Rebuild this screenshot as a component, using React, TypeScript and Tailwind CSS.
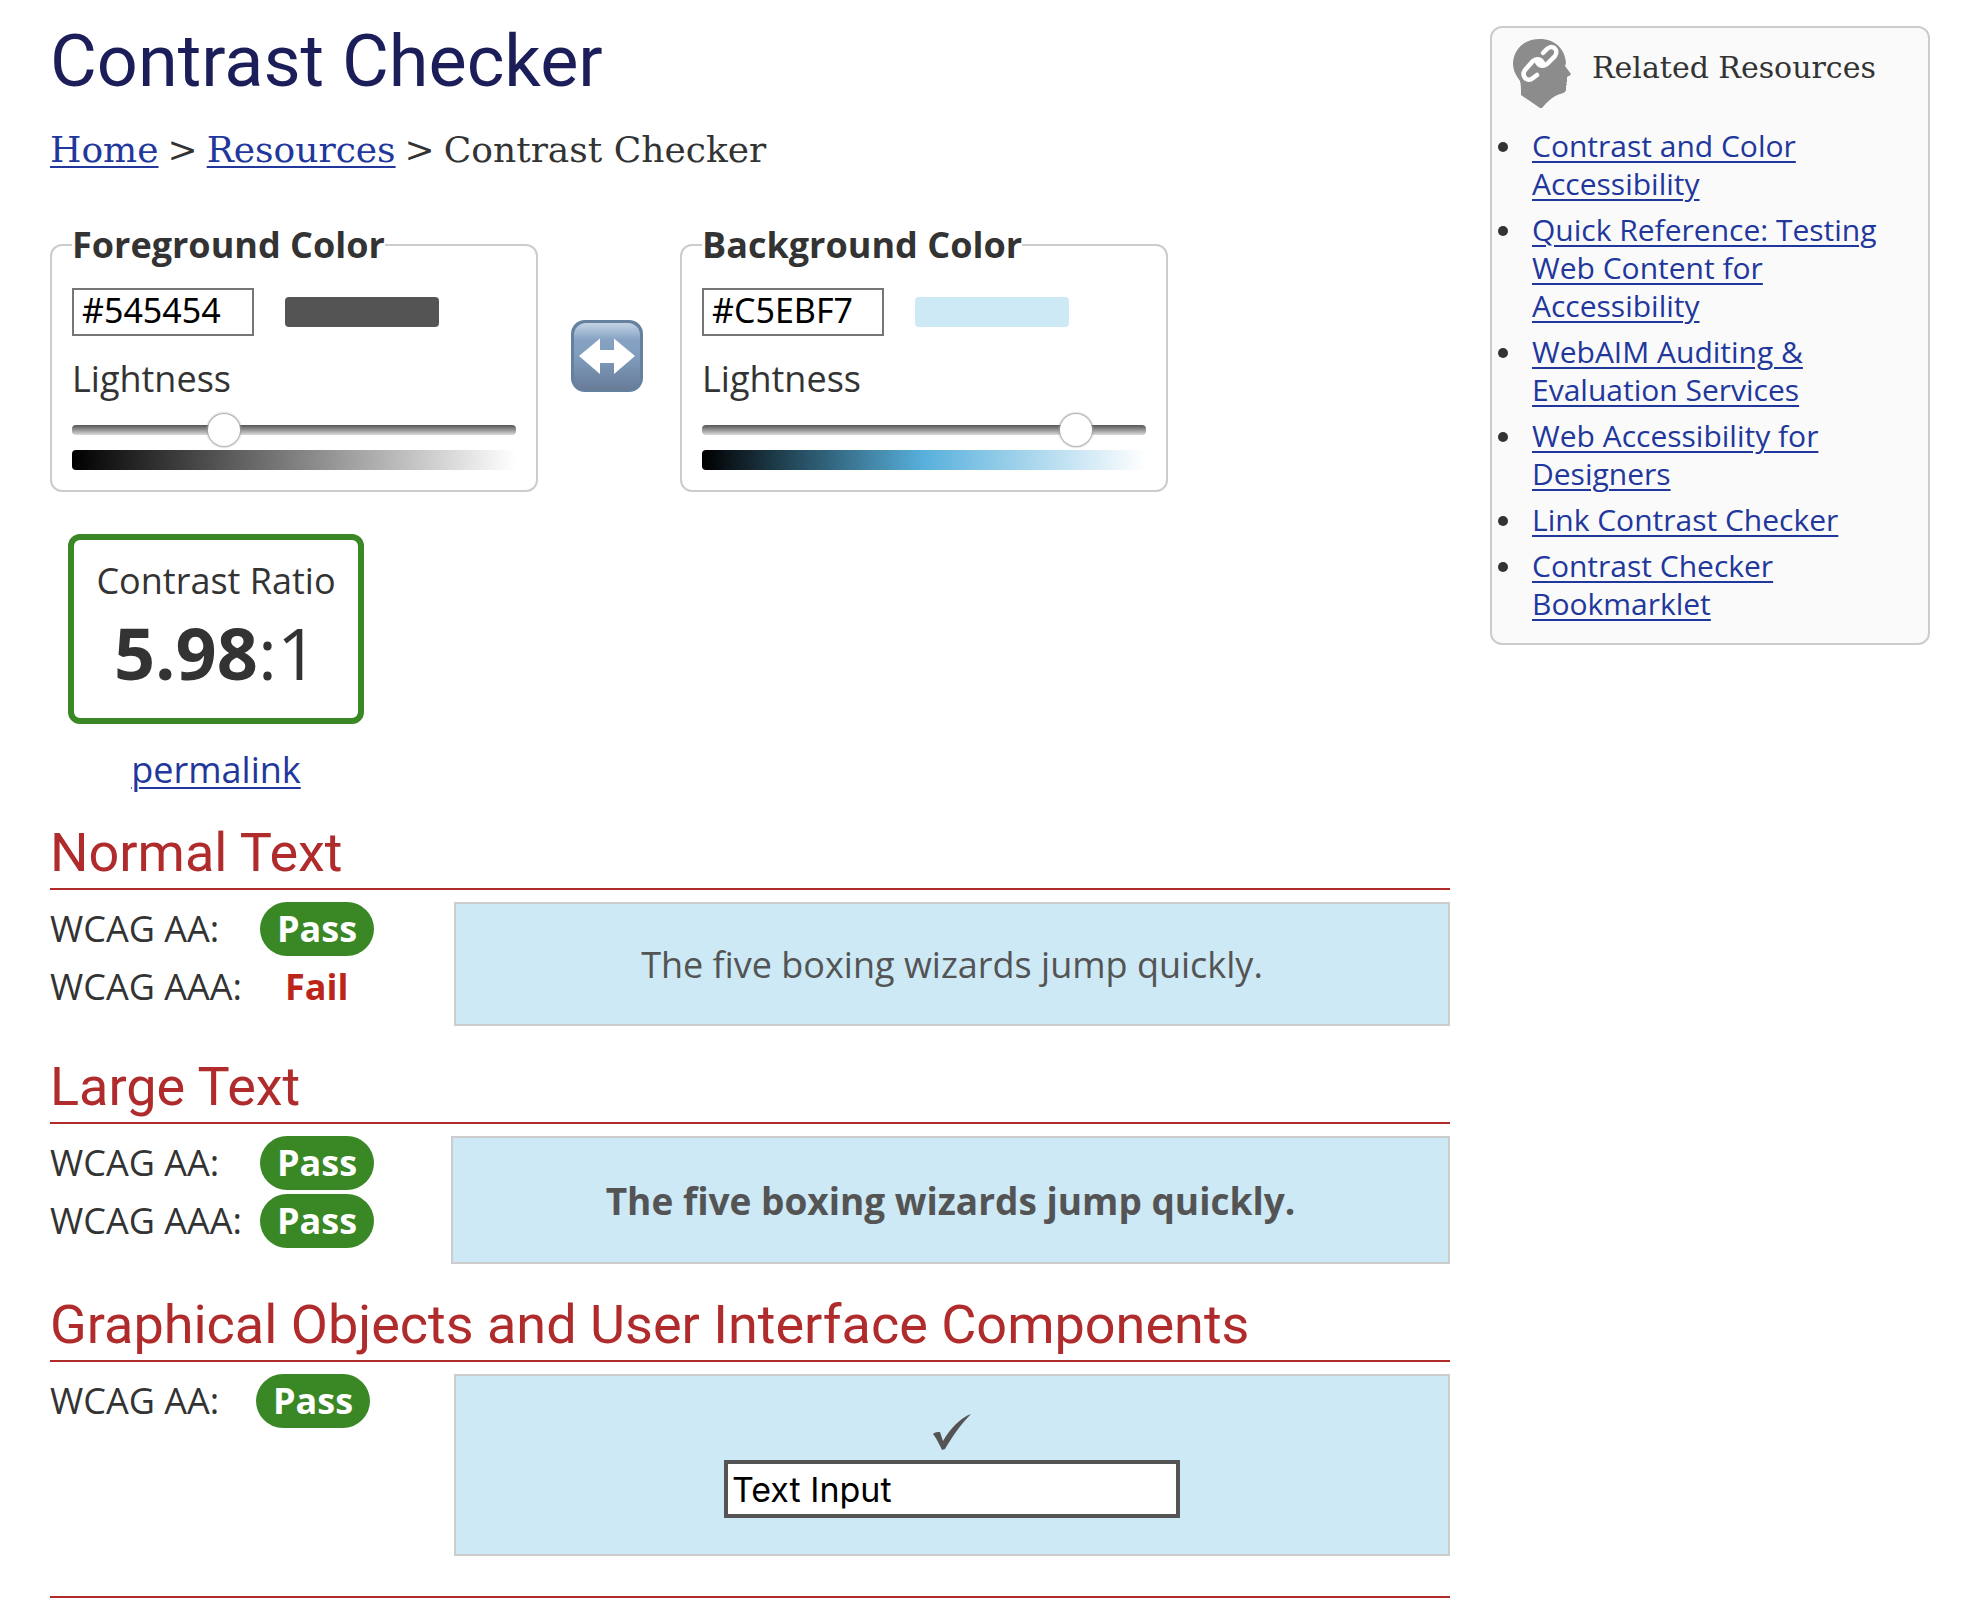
import { useState, type ReactNode } from "react";

const SANS = "font-['Open_Sans',sans-serif]";
const linkClass = "text-[#22379c] underline decoration-2 underline-offset-4";

const related = [
  "Contrast and Color Accessibility",
  "Quick Reference: Testing Web Content for Accessibility",
  "WebAIM Auditing & Evaluation Services",
  "Web Accessibility for Designers",
  "Link Contrast Checker",
  "Contrast Checker Bookmarklet",
];

function ColorField({ id, title, hex, swatch, gradient, lightness }: {
  id: string; title: string; hex: string; swatch: string; gradient: string; lightness: number;
}) {
  const [value, setValue] = useState(hex);
  const [level, setLevel] = useState(lightness);
  return (
    <fieldset className="w-[488px] rounded-xl border-2 border-[#ccc] px-5 pb-5">
      <legend className="text-[36px] leading-[50px] font-bold">{title}</legend>
      <div className="mt-[18px] flex items-center gap-[31px]">
        <input
          aria-label={`${title} hex value`}
          className="h-12 w-[182px] border-2 border-[#767676] bg-white px-2 pb-1 font-['Noto_Sans',sans-serif] text-[34px] text-black"
          value={value}
          onChange={(e) => setValue(e.target.value)}
        />
        <div className={`h-[30px] w-[154px] rounded ${swatch}`} />
      </div>
      <label htmlFor={id} className="mt-[18px] block text-[36px] leading-[50px]">Lightness</label>
      <input
        id={id}
        type="range"
        min={0}
        max={100}
        value={level}
        onChange={(e) => setLevel(Number(e.target.value))}
        className="mt-[10px] block h-8 w-full appearance-none bg-transparent [&::-webkit-slider-runnable-track]:h-[10px] [&::-webkit-slider-runnable-track]:rounded [&::-webkit-slider-runnable-track]:bg-linear-to-b [&::-webkit-slider-runnable-track]:from-[#555] [&::-webkit-slider-runnable-track]:to-[#ddd] [&::-webkit-slider-thumb]:-mt-[11px] [&::-webkit-slider-thumb]:size-8 [&::-webkit-slider-thumb]:appearance-none [&::-webkit-slider-thumb]:rounded-full [&::-webkit-slider-thumb]:bg-white [&::-webkit-slider-thumb]:shadow-[0_0_2px_1px_#999]"
      />
      <div className={`mt-1 h-5 rounded ${gradient}`} />
    </fieldset>
  );
}

function Section({ title, results, nudge, children }: {
  title: string; results: [string, boolean][]; nudge?: boolean; children: ReactNode;
}) {
  return (
    <section className="mb-[26px]">
      <h2 className="border-b-2 border-[#b02b2c] font-[Roboto,sans-serif] text-[54px] leading-[70px] text-[#b02b2c]">{title}</h2>
      <div className="mt-3 flex items-start">
        <div className={nudge ? "w-[401px] shrink-0" : "w-[404px] shrink-0"}>
          {results.map(([name, ok]) => (
            <div key={name} className="mb-1 flex h-[54px] items-center last:mb-0">
              <span className={results.length > 1 ? "w-[210px]" : "w-[206px]"}>{name}</span>
              {ok ? (
                <b className="rounded-[27px] bg-[#3a8725] px-[17px] leading-[54px] text-white">Pass</b>
              ) : (
                <b className="px-[25px] leading-[54px] text-[#bb2619]">Fail</b>
              )}
            </div>
          ))}
        </div>
        {children}
      </div>
    </section>
  );
}

function SwapIcon() {
  return (
    <svg viewBox="0 0 72 72" className="size-[72px]" aria-hidden="true">
      <defs>
        <linearGradient id="swapFace" x1="0" y1="0" x2="0" y2="1">
          <stop offset="0" stopColor="#c3d3e4" />
          <stop offset="0.25" stopColor="#86a3c4" />
          <stop offset="0.5" stopColor="#7f9cbd" />
          <stop offset="1" stopColor="#687c97" />
        </linearGradient>
      </defs>
      <rect width="72" height="72" rx="14" fill="#66809f" />
      <rect x="3" y="3" width="66" height="67" rx="12" fill="url(#swapFace)" />
      <path d="M8 36 29 18.500V30H43V18.500L64 36 43 54V43H29V54Z" fill="#fff" />
    </svg>
  );
}

function HeadIcon() {
  return (
    <svg viewBox="0 0 58 70" className="h-[70px] w-[58px]" aria-hidden="true">
      <path d="M27 0C42 0 52 10 53 24L52 27 58 35C57 37 55 37 54 38L54 43 53 44 54 45 53 47 53 51C52 54 50 54 47 55 40 57 34 63 29 69H27L8 56C8 50 8 46 7 42 3 36 0 32 0 24 1 9 12 0 27 0Z" fill="#8c8c8c" />
      <g fill="none" stroke="#fff" strokeWidth="4.500" strokeLinecap="round">
        <path d="M30 14 34 10C40 5 46 11 42 17L34 25C30 28 26 27 24 23" />
        <path d="M24 36 20 39C14 44 8 37 12 31L20 22C24 19 28 20 30 24" />
      </g>
    </svg>
  );
}

export default function App() {
  return (
    <div className={`flex items-start justify-between bg-white pt-[26px] pr-[34px] pl-[50px] text-[36px] text-[#333] ${SANS}`}>
      <main className="mr-10 min-w-0 flex-1">
        <h1 className="font-[Roboto,sans-serif] text-[72px] leading-[72px] text-[#1c1e5a]">Contrast Checker</h1>
        <nav aria-label="Breadcrumb" className="mt-[27px] flex gap-[9px] font-['DejaVu_Serif',serif] text-[36px] leading-[50px]">
          <a href="#home" className={linkClass}>Home</a>
          <span>&gt;</span>
          <a href="#resources" className={linkClass}>Resources</a>
          <span>&gt;</span>
          <span>Contrast Checker</span>
        </nav>
        <form className="mt-[45px] flex items-start" onSubmit={(e) => e.preventDefault()}>
          <ColorField id="fg" title="Foreground Color" hex="#545454" swatch="bg-[#545454]" gradient="bg-linear-to-r/srgb from-black to-white" lightness={33} />
          <button type="button" aria-label="Swap colors" className="mr-[37px] ml-[33px] mt-[100px]"><SwapIcon /></button>
          <ColorField id="bg" title="Background Color" hex="#C5EBF7" swatch="bg-[#cce9f5]" gradient="bg-linear-to-r/srgb from-black via-[#58b0dc] to-white" lightness={87} />
        </form>
        <div className="mt-[42px] ml-[18px] w-[296px] text-center">
          <div className="h-[190px] rounded-xl border-[6px] border-[#3a8725] pt-4">
            <div className="leading-[50px]">Contrast Ratio</div>
            <div className="text-[72px] leading-[92px]"><b>5.98</b>:1</div>
          </div>
          <div className="mt-5 leading-[52px]">
            <a href="#permalink" className={linkClass}>permalink</a>
          </div>
        </div>
        <div className="mt-[22px]">
          <Section title="Normal Text" results={[["WCAG AA:", true], ["WCAG AAA:", false]]}>
            <div className="flex h-[124px] flex-1 items-center justify-center border-2 border-[#ccc] bg-[#cce9f5] pt-0.5 text-[#545454]">The five boxing wizards jump quickly.</div>
          </Section>
          <Section title="Large Text" nudge results={[["WCAG AA:", true], ["WCAG AAA:", true]]}>
            <div className="flex h-32 flex-1 items-center justify-center border-2 border-[#ccc] bg-[#cce9f5] pt-0.5 text-[37px] font-bold text-[#545454]">The five boxing wizards jump quickly.</div>
          </Section>
          <Section title="Graphical Objects and User Interface Components" results={[["WCAG AA:", true]]}>
            <div className="flex h-[182px] flex-1 flex-col items-center border-2 border-[#ccc] bg-[#cce9f5] pt-[38px]">
              <svg viewBox="0 0 38 36" className="h-9 w-[38px]" role="img" aria-label="Check mark">
                <path d="M0 20C2 18 5 18 7 18L10 27C17 15 27 4 38 0 28 10 19 23 12 35L9 36C7 32 4 25 0 20Z" fill="#545454" />
              </svg>
              <input aria-label="Sample text input" defaultValue="Text Input" className="mt-[10px] h-[58px] w-[456px] border-4 border-[#545454] bg-white px-1 font-[Inter,sans-serif] text-[34px] text-black" />
            </div>
          </Section>
        </div>
        <div className="mt-10 border-t-2 border-[#b02b2c]" />
      </main>
      <aside className="w-[440px] shrink-0 rounded-xl border-2 border-[#ccc] bg-[#fafafa] pb-3">
        <div className="flex items-start pt-[11px] pl-[21px]">
          <HeadIcon />
          <h2 className="ml-[21px] font-['DejaVu_Serif',serif] text-[30px] leading-[58px]">Related Resources</h2>
        </div>
        <ul className="mt-[18px] pr-5 pl-10 text-[30px] leading-[38px]">
          {related.map((item) => (
            <li key={item} className="relative mb-2 before:absolute before:top-[15px] before:-left-[34px] before:size-[10px] before:rounded-full before:bg-[#333]">
              <a href="#related" className={linkClass}>{item}</a>
            </li>
          ))}
        </ul>
      </aside>
    </div>
  );
}
